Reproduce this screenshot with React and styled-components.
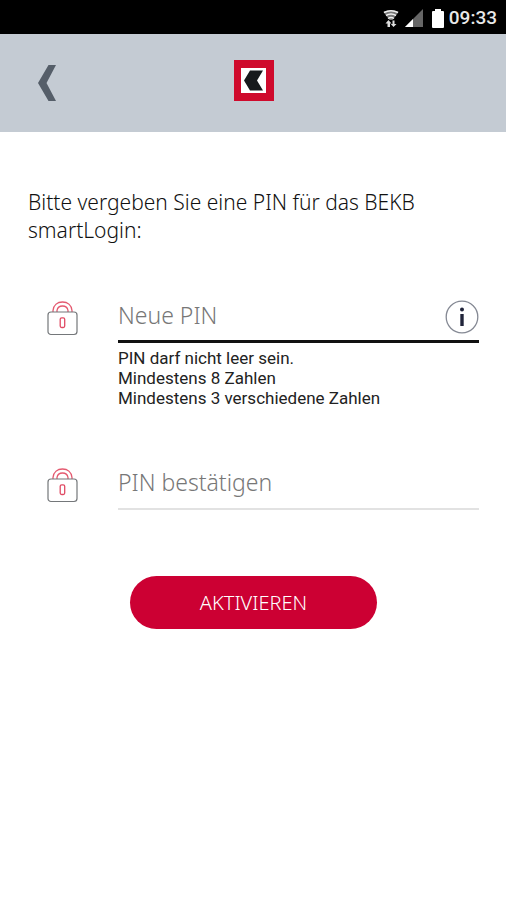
import React from "react";
import styled, { createGlobalStyle } from "styled-components";

const GlobalStyle = createGlobalStyle`
  *, *::before, *::after { box-sizing: border-box; }
  body {
    margin: 0;
    background: #fff;
    color: #111;
    font-family: "Noto Sans", "Open Sans", sans-serif;
  }
`;

const Screen = styled.div`
  min-height: 100vh;
  background: #fff;
`;

const StatusBar = styled.div`
  display: flex;
  align-items: center;
  justify-content: flex-end;
  height: 34px;
  padding: 2px 9px 0 0;
  background: #000;
  color: #e8e8e8;
`;

const StatusIcon = styled.svg`
  display: block;
  flex: none;
  margin-right: ${(p) => p.$gap}px;
`;

const Clock = styled.time`
  font: 500 19px/24px Roboto, sans-serif;
`;

const Header = styled.header`
  display: grid;
  grid-template-columns: 1fr auto 1fr;
  align-items: center;
  height: 98px;
  padding: 0 27px 6px 28px;
  background: #c4cbd3;
`;

const BackButton = styled.button`
  display: flex;
  align-items: center;
  justify-content: center;
  width: 38px;
  height: 48px;
  margin-top: 6px;
  padding: 0;
  border: 0;
  background: none;
  cursor: pointer;
`;

const Block = styled.svg`
  display: block;
`;

const Form = styled.form`
  padding: 56px 27px 0 28px;
`;

const Intro = styled.p`
  margin: 0 0 45px;
  font-size: 21px;
  font-weight: 300;
  line-height: 28px;
`;

const Field = styled.div`
  display: grid;
  grid-template-columns: 90px minmax(0, 1fr);
  margin-bottom: ${(p) => p.$space}px;
`;

const LockLabel = styled.label`
  padding: 11px 0 0 19px;
`;

const InputLine = styled.div`
  display: flex;
  align-items: center;
  height: 54px;
  border-bottom: ${(p) => (p.$active ? "3px solid #111" : "2px solid #e2e2e2")};
`;

const PinInput = styled.input`
  flex: 1;
  min-width: 0;
  height: 48px;
  padding: 0;
  border: 0;
  outline: 0;
  background: none;
  color: #222;
  font: 300 23px/32px "Noto Sans", "Open Sans", sans-serif;

  &::placeholder {
    color: #777;
    opacity: 1;
  }
`;

const InfoButton = styled.button`
  flex: none;
  margin-top: 4px;
  padding: 0;
  border: 0;
  background: none;
  cursor: pointer;
`;

const Rules = styled.ul`
  grid-column: 2;
  margin: 0;
  padding: 5px 0 0;
  list-style: none;
  color: #222;
  font: 400 17px/20px Roboto, sans-serif;
`;

const SubmitButton = styled.button`
  display: block;
  width: 247px;
  height: 53px;
  margin: 0 auto;
  padding: 0;
  border: 0;
  border-radius: 27px;
  background: #cc0033;
  color: #fff;
  font: 300 20px/28px "Noto Sans", "Open Sans", sans-serif;
  cursor: pointer;
`;

function LockIcon() {
  return (
    <Block width="31" height="36" viewBox="0 0 31 36" fill="none" aria-hidden="true">
      <path d="M6 12V10.500C6.500 5 10.500 2 15.500 2S24.500 5 25 10.500V12" stroke="#e45a70" strokeWidth="1.300" />
      <path d="M10 12V10.500C10.500 7.500 12.500 6 15.500 6S20.500 7.500 21 10.500V12" stroke="#e45a70" strokeWidth="1.300" />
      <rect x="1" y="12" width="29" height="22.500" rx="3" stroke="#74777a" strokeWidth="1.200" fill="#fff" />
      <rect x="13.200" y="17.800" width="4.500" height="9.700" rx="1.500" stroke="#e04b64" strokeWidth="1.300" />
    </Block>
  );
}

export default function App() {
  return (
    <Screen>
      <GlobalStyle />
      <StatusBar>
        <StatusIcon $gap={6} width="16" height="19" viewBox="0 0 16 19" aria-hidden="true">
          <path d="M0.500 3Q8-1 15.500 3L9.500 11h-3z" fill="#777" />
          <path d="M1 3.500Q8 0 15 3.500M3 6.500Q8 3.500 13 6.500M5 9.500Q8 7.500 11 9.500" fill="none" stroke="#eee" strokeWidth="1.500" />
          <path d="M5.500 11L8.500 14.500H7V18H4.500V14.500H2.500zM10.500 18L7.800 15H9.500V11.500H11.500V15H13.500z" fill="#ddd" />
        </StatusIcon>
        <StatusIcon $gap={9} width="18" height="18" viewBox="0 0 18 18" aria-hidden="true">
          <path d="M18 0v18H0z" fill="#666" />
          <path d="M8 10v8H0z" fill="#fff" />
        </StatusIcon>
        <StatusIcon $gap={5} width="12" height="19" viewBox="0 0 12 19" aria-hidden="true">
          <path d="M3 0h6v2h2q1 0 1 1v15q0 1-1 1H1q-1 0-1-1V3q0-1 1-1h2z" fill="#fff" />
        </StatusIcon>
        <Clock>09:33</Clock>
      </StatusBar>

      <Header>
        <BackButton type="button" aria-label="Zurück">
          <Block width="18" height="36" viewBox="0 0 18 36" aria-hidden="true">
            <path d="M10.500 0H18L8.500 18 18 36H10.500L0 18z" fill="#555e69" />
          </Block>
        </BackButton>
        <Block width="40" height="41" viewBox="0 0 40 41" role="img" aria-label="BEKB">
          <path d="M0 0h40v41H0z" fill="#cf0a2c" />
          <path d="M7 8h25v25H7z" fill="#fff" />
          <path d="M16 10.500h13l-6 10 6 10H16l-6-10z" fill="#171a1c" />
        </Block>
      </Header>

      <Form noValidate onSubmit={(e) => e.preventDefault()}>
        <Intro>Bitte vergeben Sie eine PIN für das BEKB smartLogin:</Intro>

        <Field $space={48}>
          <LockLabel htmlFor="new-pin" aria-label="Neue PIN">
            <LockIcon />
          </LockLabel>
          <InputLine $active>
            <PinInput id="new-pin" type="password" inputMode="numeric" placeholder="Neue PIN" aria-describedby="pin-rules" />
            <InfoButton type="button" aria-label="Information">
              <Block width="34" height="34" viewBox="0 0 34 34" aria-hidden="true">
                <circle cx="17" cy="17" r="15.800" fill="#fff" stroke="#858994" strokeWidth="1.300" />
                <circle cx="17" cy="9.500" r="2" fill="#20243a" />
                <path d="M15.300 14h3.400v12h-3.400z" fill="#20243a" />
              </Block>
            </InfoButton>
          </InputLine>
          <Rules id="pin-rules">
            <li>PIN darf nicht leer sein.</li>
            <li>Mindestens 8 Zahlen</li>
            <li>Mindestens 3 verschiedene Zahlen</li>
          </Rules>
        </Field>

        <Field $space={66}>
          <LockLabel htmlFor="confirm-pin" aria-label="PIN bestätigen">
            <LockIcon />
          </LockLabel>
          <InputLine>
            <PinInput id="confirm-pin" type="password" inputMode="numeric" placeholder="PIN bestätigen" />
          </InputLine>
        </Field>

        <SubmitButton type="submit">AKTIVIEREN</SubmitButton>
      </Form>
    </Screen>
  );
}
